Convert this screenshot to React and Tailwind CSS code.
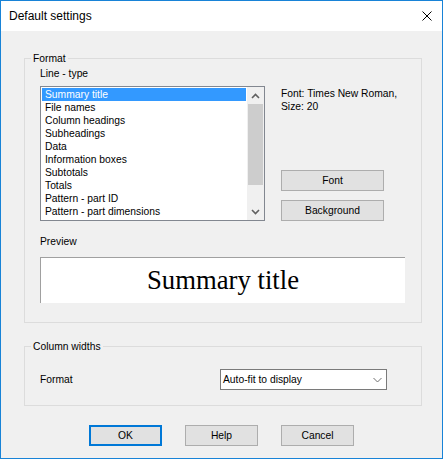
import React from "react";

const items = [
  "Summary title",
  "File names",
  "Column headings",
  "Subheadings",
  "Data",
  "Information boxes",
  "Subtotals",
  "Totals",
  "Pattern - part ID",
  "Pattern - part dimensions",
];

const ui = { fontFamily: '"Liberation Sans", Arial, sans-serif' };

const Chevron = ({ up }) => (
  <svg width="9" height="6" viewBox="0 0 9 6">
    <polyline
      points={up ? "1,5 4.5,1.5 8,5" : "1,1 4.5,4.5 8,1"}
      fill="none"
      stroke="#606060"
      strokeWidth="1.6"
    />
  </svg>
);

const Button = ({ children, wide, primary }) => (
  <div
    className={`flex h-[21px] items-center justify-center bg-[#e1e1e1] ${
      wide ? "w-[103px]" : "w-[73px]"
    } ${primary ? "border-2 border-[#0078d7]" : "border border-[#adadad]"}`}
  >
    {children}
  </div>
);

export default function App() {
  const [selected, setSelected] = React.useState(0);

  return (
    <div
      className="flex h-[459px] w-[443px] flex-col border border-[#1883d7] bg-[#f0f0f0] text-[10.3px] leading-[13px] text-black"
      style={ui}
    >
      {/* title bar */}
      <div className="flex h-[30px] items-center justify-between bg-white pl-[8px] pr-[10px]">
        <span className="text-[12px]">Default settings</span>
        <svg width="10" height="10" viewBox="0 0 10 10">
          <path d="M0.5 0.5 L9.5 9.5 M9.5 0.5 L0.5 9.5" stroke="#000" strokeWidth="1" />
        </svg>
      </div>

      {/* Format group */}
      <fieldset className="ml-[23px] mt-[21px] w-[398px] border border-[#dcdcdc]">
        <legend className="ml-[6px] px-[2px]">Format</legend>
        <div className="pb-[19px] pl-[15px] pt-[2px]">
          <div>Line - type</div>

          <div className="mt-[6px] flex">
            {/* list box */}
            <div className="flex h-[135px] w-[225px] border border-[#828790] bg-white">
              <div className="flex-1 p-[1px]">
                {items.map((item, i) => (
                  <div
                    key={i}
                    onClick={() => setSelected(i)}
                    className={`h-[13px] pl-[3px] ${
                      i === selected ? "bg-[#3399ff] text-white" : ""
                    }`}
                  >
                    {item}
                  </div>
                ))}
              </div>
              <div className="flex w-[17px] flex-col bg-[#f0f0f0]">
                <div className="flex h-[17px] items-center justify-center">
                  <Chevron up />
                </div>
                <div className="mx-[1px] h-[81px] bg-[#cdcdcd]" />
                <div className="flex-1" />
                <div className="flex h-[17px] items-center justify-center">
                  <Chevron />
                </div>
              </div>
            </div>

            {/* font info + buttons */}
            <div className="ml-[16px] flex flex-col justify-between">
              <div className="mt-[1px]">
                Font: Times New Roman,
                <br />
                Size: 20
              </div>
              <div className="flex flex-col gap-[9px]">
                <Button wide>Font</Button>
                <Button wide>Background</Button>
              </div>
            </div>
          </div>

          <div className="mt-[14px]">Preview</div>
          <div className="mt-[9px] flex h-[46px] w-[365px] items-center justify-center border-l border-t border-[#a0a0a0] bg-white">
            <span
              className="text-[26.7px] leading-none"
              style={{ fontFamily: '"Liberation Serif", "Times New Roman", serif' }}
            >
              Summary title
            </span>
          </div>
        </div>
      </fieldset>

      {/* Column widths group */}
      <fieldset className="ml-[23px] mt-[17px] w-[398px] border border-[#dcdcdc]">
        <legend className="ml-[6px] px-[2px]">Column widths</legend>
        <div className="flex items-center pb-[15px] pl-[15px] pt-[16px]">
          <div className="w-[180px]">Format</div>
          <div className="flex h-[21px] w-[167px] items-center justify-between border border-[#7a7a7a] bg-white pl-[2px] pr-[4px]">
            <span>Auto-fit to display</span>
            <svg width="9" height="6" viewBox="0 0 9 6">
              <polyline points="0.5,1 4.5,5 8.5,1" fill="none" stroke="#707070" strokeWidth="1" />
            </svg>
          </div>
        </div>
      </fieldset>

      {/* dialog buttons */}
      <div className="mt-[19px] flex justify-center gap-[23px]">
        <Button primary>OK</Button>
        <Button>Help</Button>
        <Button>Cancel</Button>
      </div>
    </div>
  );
}
